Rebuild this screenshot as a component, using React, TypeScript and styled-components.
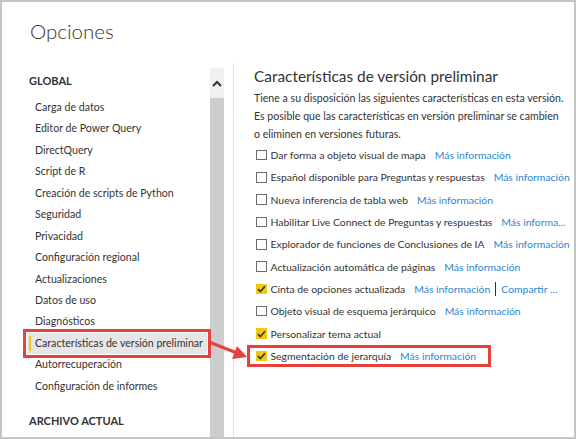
import React from "react";
import styled, { createGlobalStyle } from "styled-components";

const GlobalStyle = createGlobalStyle`
  html, body { margin: 0; padding: 0; background: #fff; }
  body { font-family: Lato, "Open Sans", "Liberation Sans", sans-serif; color: #333; }
  * { box-sizing: border-box; }
`;

const Frame = styled.div`
  position: relative;
  width: 576px;
  height: 439px;
  border: 2px solid #c4c4c4;
  display: flex;
  flex-direction: column;
  overflow: hidden;
  background: #fff;
`;

const Title = styled.h1`
  margin: 0;
  padding: 16px 0 0 28px;
  height: 61px;
  font-size: 20.5px;
  line-height: 26px;
  font-weight: 300;
  color: #333;
`;

const Body = styled.div`
  flex: 1;
  display: flex;
  min-height: 0;
`;

const Sidebar = styled.nav`
  flex: none;
  width: 208px;
  padding-top: 6px;
  display: flex;
  flex-direction: column;
`;

const SectionHeading = styled.div<{ $bottom?: boolean }>`
  height: 24px;
  line-height: 24px;
  padding-left: 27px;
  font-size: 11px;
  font-weight: 700;
  color: #333;
  margin-bottom: ${(p) => (p.$bottom ? "0" : "4px")};
  margin-top: ${(p) => (p.$bottom ? "12px" : "0")};
`;

const NavItem = styled.div<{ $active?: boolean; $boxed?: boolean }>`
  position: relative;
  flex: none;
  height: 21.45px;
  line-height: 21.45px;
  font-size: 10.6px;
  color: #333;
  white-space: nowrap;
  margin-left: ${(p) => (p.$active ? "25px" : "0")};
  margin-right: ${(p) => (p.$active ? "3px" : "0")};
  padding-left: ${(p) => (p.$active ? "8px" : "33px")};
  background: ${(p) => (p.$active ? "#e6e6e6" : "transparent")};
  outline: ${(p) => (p.$boxed ? "3px solid #e8403b" : "none")};
  outline-offset: 1px;
  &::before {
    content: "";
    display: ${(p) => (p.$active ? "block" : "none")};
    position: absolute;
    left: 2px;
    top: 3px;
    bottom: 3px;
    width: 2px;
    background: #f2c811;
  }
`;

const Scrollbar = styled.div`
  flex: none;
  width: 14px;
  margin-top: 5px;
  display: flex;
  flex-direction: column;
  background: #f0f0f0;
`;

const ScrollButton = styled.div`
  height: 30px;
  display: flex;
  align-items: center;
  justify-content: center;
`;

const Thumb = styled.div`
  flex: 1;
  background: #cdcdcd;
`;

const Divider = styled.div`
  flex: none;
  width: 1px;
  margin-left: 9px;
  background: #e1e1e1;
`;

const Content = styled.main`
  flex: 1;
  min-width: 0;
  padding: 2px 0 0 20px;
`;

const ContentTitle = styled.h2`
  margin: 0;
  font-size: 15.4px;
  font-weight: 400;
  color: #333;
  height: 23px;
  line-height: 23px;
`;

const Description = styled.p`
  margin: 1px 0 1px 0;
  font-size: 10.6px;
  line-height: 18px;
  color: #333;
  width: 312px;
`;

const Row = styled.div<{ $boxed?: boolean }>`
  display: flex;
  align-items: center;
  height: 22.3px;
  font-size: 10.4px;
  color: #333;
  white-space: nowrap;
  width: ${(p) => (p.$boxed ? "244px" : "auto")};
  margin-left: ${(p) => (p.$boxed ? "-7px" : "2px")};
  padding-left: ${(p) => (p.$boxed ? "6px" : "0")};
  border: ${(p) => (p.$boxed ? "3px solid #e8403b" : "none")};
`;

const Box = styled.span<{ $checked?: boolean }>`
  width: 10.5px;
  height: 10.5px;
  flex: none;
  margin-right: 4px;
  border: ${(p) => (p.$checked ? "none" : "1.5px solid #6b6b6b")};
  background: ${(p) => (p.$checked ? "#f2c811" : "#fff")};
  display: flex;
  align-items: center;
  justify-content: center;
`;

const Label = styled.span`
  margin-right: 9px;
`;

const Link = styled.a`
  color: #2a86d3;
  text-decoration: none;
`;

const Sep = styled.span`
  display: inline-block;
  width: 1px;
  height: 14px;
  background: #333;
  margin: 0 5px;
`;

const ArrowSvg = styled.svg`
  position: absolute;
  left: 205px;
  top: 334px;
  pointer-events: none;
`;

const navItems = [
  "Carga de datos",
  "Editor de Power Query",
  "DirectQuery",
  "Script de R",
  "Creación de scripts de Python",
  "Seguridad",
  "Privacidad",
  "Configuración regional",
  "Actualizaciones",
  "Datos de uso",
  "Diagnósticos",
  "Características de versión preliminar",
  "Autorrecuperación",
  "Configuración de informes",
];

type Feature = { label: string; checked?: boolean; link: string; extra?: string; boxed?: boolean };

const features: Feature[] = [
  { label: "Dar forma a objeto visual de mapa", link: "Más información" },
  { label: "Español disponible para Preguntas y respuestas", link: "Más información" },
  { label: "Nueva inferencia de tabla web", link: "Más información" },
  { label: "Habilitar Live Connect de Preguntas y respuestas", link: "Más informa..." },
  { label: "Explorador de funciones de Conclusiones de IA", link: "Más información" },
  { label: "Actualización automática de páginas", link: "Más información" },
  { label: "Cinta de opciones actualizada", checked: true, link: "Más información", extra: "Compartir ..." },
  { label: "Objeto visual de esquema jerárquico", link: "Más información" },
  { label: "Personalizar tema actual", checked: true, link: "" },
  { label: "Segmentación de jerarquía", checked: true, link: "Más información", boxed: true },
];

const Check = () => (
  <svg width="9" height="8" viewBox="0 0 9 8">
    <path d="M1 4.2 L3.4 6.5 L8 1.2" fill="none" stroke="#333" strokeWidth="1.6" />
  </svg>
);

export default function App() {
  return (
    <>
      <GlobalStyle />
      <Frame>
        <Title>Opciones</Title>
        <Body>
          <Sidebar>
            <SectionHeading>GLOBAL</SectionHeading>
            {navItems.map((n) => {
              const active = n === "Características de versión preliminar";
              return (
                <NavItem key={n} $active={active} $boxed={active}>
                  {n}
                </NavItem>
              );
            })}
            <SectionHeading $bottom>ARCHIVO ACTUAL</SectionHeading>
          </Sidebar>
          <Scrollbar>
            <ScrollButton>
              <svg width="10" height="7" viewBox="0 0 10 7">
                <path d="M1 6 L5 2 L9 6" fill="none" stroke="#333" strokeWidth="2" />
              </svg>
            </ScrollButton>
            <Thumb />
          </Scrollbar>
          <Divider />
          <Content>
            <ContentTitle>Características de versión preliminar</ContentTitle>
            <Description>
              Tiene a su disposición las siguientes características en esta versión. Es posible que las
              características en versión preliminar se cambien o eliminen en versiones futuras.
            </Description>
            {features.map((f) => (
              <Row key={f.label} $boxed={f.boxed}>
                <Box $checked={f.checked}>{f.checked && <Check />}</Box>
                <Label>{f.label}</Label>
                {f.link && <Link href="#">{f.link}</Link>}
                {f.extra && (
                  <>
                    <Sep />
                    <Link href="#">{f.extra}</Link>
                  </>
                )}
              </Row>
            ))}
          </Content>
        </Body>
        <ArrowSvg width="44" height="28" viewBox="0 0 44 28">
          <line x1="2" y1="6" x2="30" y2="17" stroke="#e8403b" strokeWidth="3" />
          <polygon points="40,21 25,23 30,10" fill="#e8403b" />
        </ArrowSvg>
      </Frame>
    </>
  );
}
